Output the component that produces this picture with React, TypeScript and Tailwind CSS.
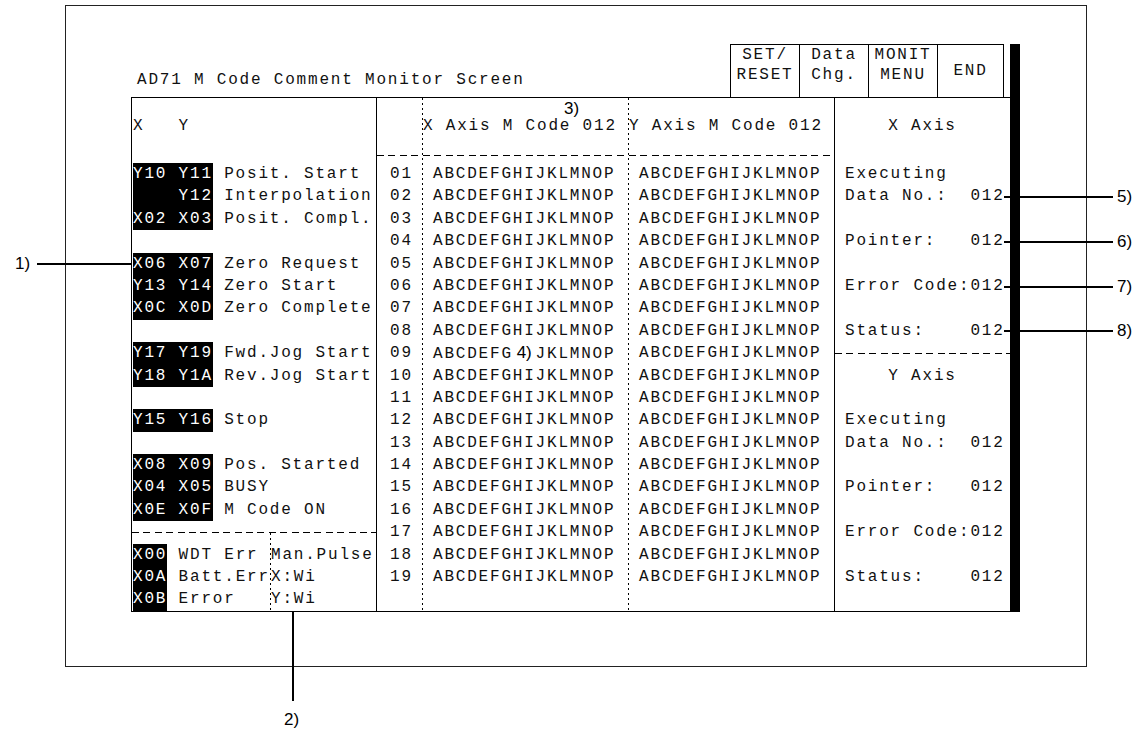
const R = 'h-[22.4px] leading-[22.4px] whitespace-pre';

const leftRows: ({ code: string; text: string } | null)[] = [
  { code: 'Y10 Y11', text: 'Posit. Start' },
  { code: '    Y12', text: 'Interpolation' },
  { code: 'X02 X03', text: 'Posit. Compl.' },
  null,
  { code: 'X06 X07', text: 'Zero Request' },
  { code: 'Y13 Y14', text: 'Zero Start' },
  { code: 'X0C X0D', text: 'Zero Complete' },
  null,
  { code: 'Y17 Y19', text: 'Fwd.Jog Start' },
  { code: 'Y18 Y1A', text: 'Rev.Jog Start' },
  null,
  { code: 'Y15 Y16', text: 'Stop' },
  null,
  { code: 'X08 X09', text: 'Pos. Started' },
  { code: 'X04 X05', text: 'BUSY' },
  { code: 'X0E X0F', text: 'M Code ON' },
];

const errRows = [
  { code: 'X00', text: 'WDT Err', right: 'Man.Pulse' },
  { code: 'X0A', text: 'Batt.Err', right: 'X:Wi' },
  { code: 'X0B', text: 'Error', right: 'Y:Wi' },
];

const nums = Array.from({ length: 19 }, (_, i) => String(i + 1).padStart(2, '0'));

const axisBlock = ['Executing', 'Data No.:  012', '', 'Pointer:   012', '', 'Error Code:012', '', 'Status:    012'];

function DashRow() {
  return (
    <div className="h-[22.4px] flex items-center">
      <div className="h-px w-full bg-[image:repeating-linear-gradient(to_right,#000_0,#000_7px,transparent_7px,transparent_11.4px)]" />
    </div>
  );
}

function Dots({ className = '' }: { className?: string }) {
  return (
    <div
      className={`w-px shrink-0 self-stretch bg-[image:repeating-linear-gradient(to_bottom,#000_0,#000_2px,transparent_2px,transparent_5px)] ${className}`}
    />
  );
}

function ColHead({ label }: { label: string }) {
  return (
    <div className="h-[65px] pt-[17px] shrink-0">
      <div className={R}>{label}</div>
      <div className="mt-[18px] h-px bg-[image:repeating-linear-gradient(to_right,#000_0,#000_7px,transparent_7px,transparent_11.4px)]" />
    </div>
  );
}

function Inv({ children }: { children: string }) {
  return <span className="inline-block bg-black text-white">{children}</span>;
}

function Note({ children, className }: { children: string; className: string }) {
  return (
    <div className={`absolute font-['Liberation_Sans',Arial,sans-serif] text-[17px] leading-[20px] tracking-normal text-black ${className}`}>
      {children}
    </div>
  );
}

export default function App() {
  return (
    <div className="relative w-[1144px] h-[733px] bg-white pt-[5px] pl-[65px] font-['Liberation_Mono',monospace] text-[16px] tracking-[1.8px] text-[#111]">
      <div className="w-[1022px] h-[662px] border border-[#222] pl-[65px] pt-[38px]">
        <div className="flex">
          <div className="w-[879px] shrink-0 flex flex-col">
            {/* title + soft keys */}
            <div className="h-[53px] flex">
              <div className={`flex-1 pt-[25px] pl-[6px] ${R}`}>AD71 M Code Comment Monitor Screen</div>
              <div className="w-[274px] mr-[6px] flex border-t border-x border-black leading-[20px] text-center">
                <div className="w-[69px] border-r border-black whitespace-pre">{'SET/\nRESET'}</div>
                <div className="w-[69px] border-r border-black whitespace-pre">{'Data\nChg.'}</div>
                <div className="w-[69px] border-r border-black whitespace-pre">{'MONIT\nMENU'}</div>
                <div className="flex-1 flex items-center justify-center">END</div>
              </div>
            </div>

            {/* monitor box */}
            <div className="h-[515px] flex border-t border-l border-b border-black">
              {/* signals */}
              <div className="w-[245px] shrink-0 border-r border-black flex flex-col">
                <div className="h-[65px] pt-[17px] pl-[1px] shrink-0">
                  <div className={R}>{'X   Y'}</div>
                </div>
                {leftRows.map((r, i) => (
                  <div key={i} className={`${R} pl-[1px]`}>
                    {r && (
                      <>
                        <Inv>{r.code}</Inv>
                        {' ' + r.text}
                      </>
                    )}
                  </div>
                ))}
                <DashRow />
                <div className="flex">
                  <div className="w-[138px] shrink-0">
                    {errRows.map((r) => (
                      <div key={r.code} className={`${R} pl-[1px]`}>
                        <Inv>{r.code}</Inv>
                        {' ' + r.text}
                      </div>
                    ))}
                  </div>
                  <Dots className="-mt-[11px]" />
                  <div>
                    {errRows.map((r) => (
                      <div key={r.right} className={R}>
                        {r.right}
                      </div>
                    ))}
                  </div>
                </div>
              </div>

              {/* M code comments */}
              <div className="w-[458px] shrink-0 border-r border-black flex">
                <div className="w-[45px] shrink-0 flex flex-col">
                  <ColHead label="" />
                  {nums.map((n) => (
                    <div key={n} className={`${R} pl-[13px]`}>
                      {n}
                    </div>
                  ))}
                </div>
                <Dots />
                <div className="w-[205px] shrink-0 flex flex-col">
                  <ColHead label="X Axis M Code 012" />
                  {nums.map((n) => (
                    <div key={n} className={`${R} pl-[10px]`}>
                      {n === '09' ? (
                        <>
                          ABCDEFG
                          <span className="inline-block w-[22.8px] text-center bg-white font-['Liberation_Sans',Arial,sans-serif] text-[17px] tracking-normal text-black">
                            4)
                          </span>
                          JKLMNOP
                        </>
                      ) : (
                        'ABCDEFGHIJKLMNOP'
                      )}
                    </div>
                  ))}
                </div>
                <Dots />
                <div className="flex-1 flex flex-col">
                  <ColHead label="Y Axis M Code 012" />
                  {nums.map((n) => (
                    <div key={n} className={`${R} pl-[10px]`}>
                      ABCDEFGHIJKLMNOP
                    </div>
                  ))}
                </div>
              </div>

              {/* axis status */}
              <div className="flex-1 flex flex-col">
                <div className="h-[65px] pt-[17px] shrink-0">
                  <div className={`${R} text-center`}>X Axis</div>
                </div>
                {axisBlock.map((t, i) => (
                  <div key={'x' + i} className={`${R} pl-[10px]`}>
                    {t}
                  </div>
                ))}
                <DashRow />
                <div className={`${R} text-center`}>Y Axis</div>
                <div className={R} />
                {axisBlock.map((t, i) => (
                  <div key={'y' + i} className={`${R} pl-[10px]`}>
                    {t}
                  </div>
                ))}
                <div className={R} />
              </div>
            </div>
          </div>
          <div className="w-[10px] shrink-0 bg-black" />
        </div>
      </div>

      {/* callouts */}
      <Note className="left-[15px] top-[254px]">1)</Note>
      <div className="absolute left-[37px] top-[263px] w-[94px] h-[2px] bg-black" />

      <Note className="left-[564px] top-[99px]">3)</Note>

      <div className="absolute left-[292px] top-[612px] w-[2px] h-[89px] bg-black" />
      <Note className="left-[284px] top-[710px]">2)</Note>

      <div className="absolute left-[1004px] top-[196px] w-[109px] h-[2px] bg-black" />
      <Note className="left-[1117px] top-[187px]">5)</Note>
      <div className="absolute left-[1004px] top-[241px] w-[109px] h-[2px] bg-black" />
      <Note className="left-[1117px] top-[232px]">6)</Note>
      <div className="absolute left-[1004px] top-[286px] w-[109px] h-[2px] bg-black" />
      <Note className="left-[1117px] top-[277px]">7)</Note>
      <div className="absolute left-[1004px] top-[330px] w-[109px] h-[2px] bg-black" />
      <Note className="left-[1117px] top-[321px]">8)</Note>
    </div>
  );
}
